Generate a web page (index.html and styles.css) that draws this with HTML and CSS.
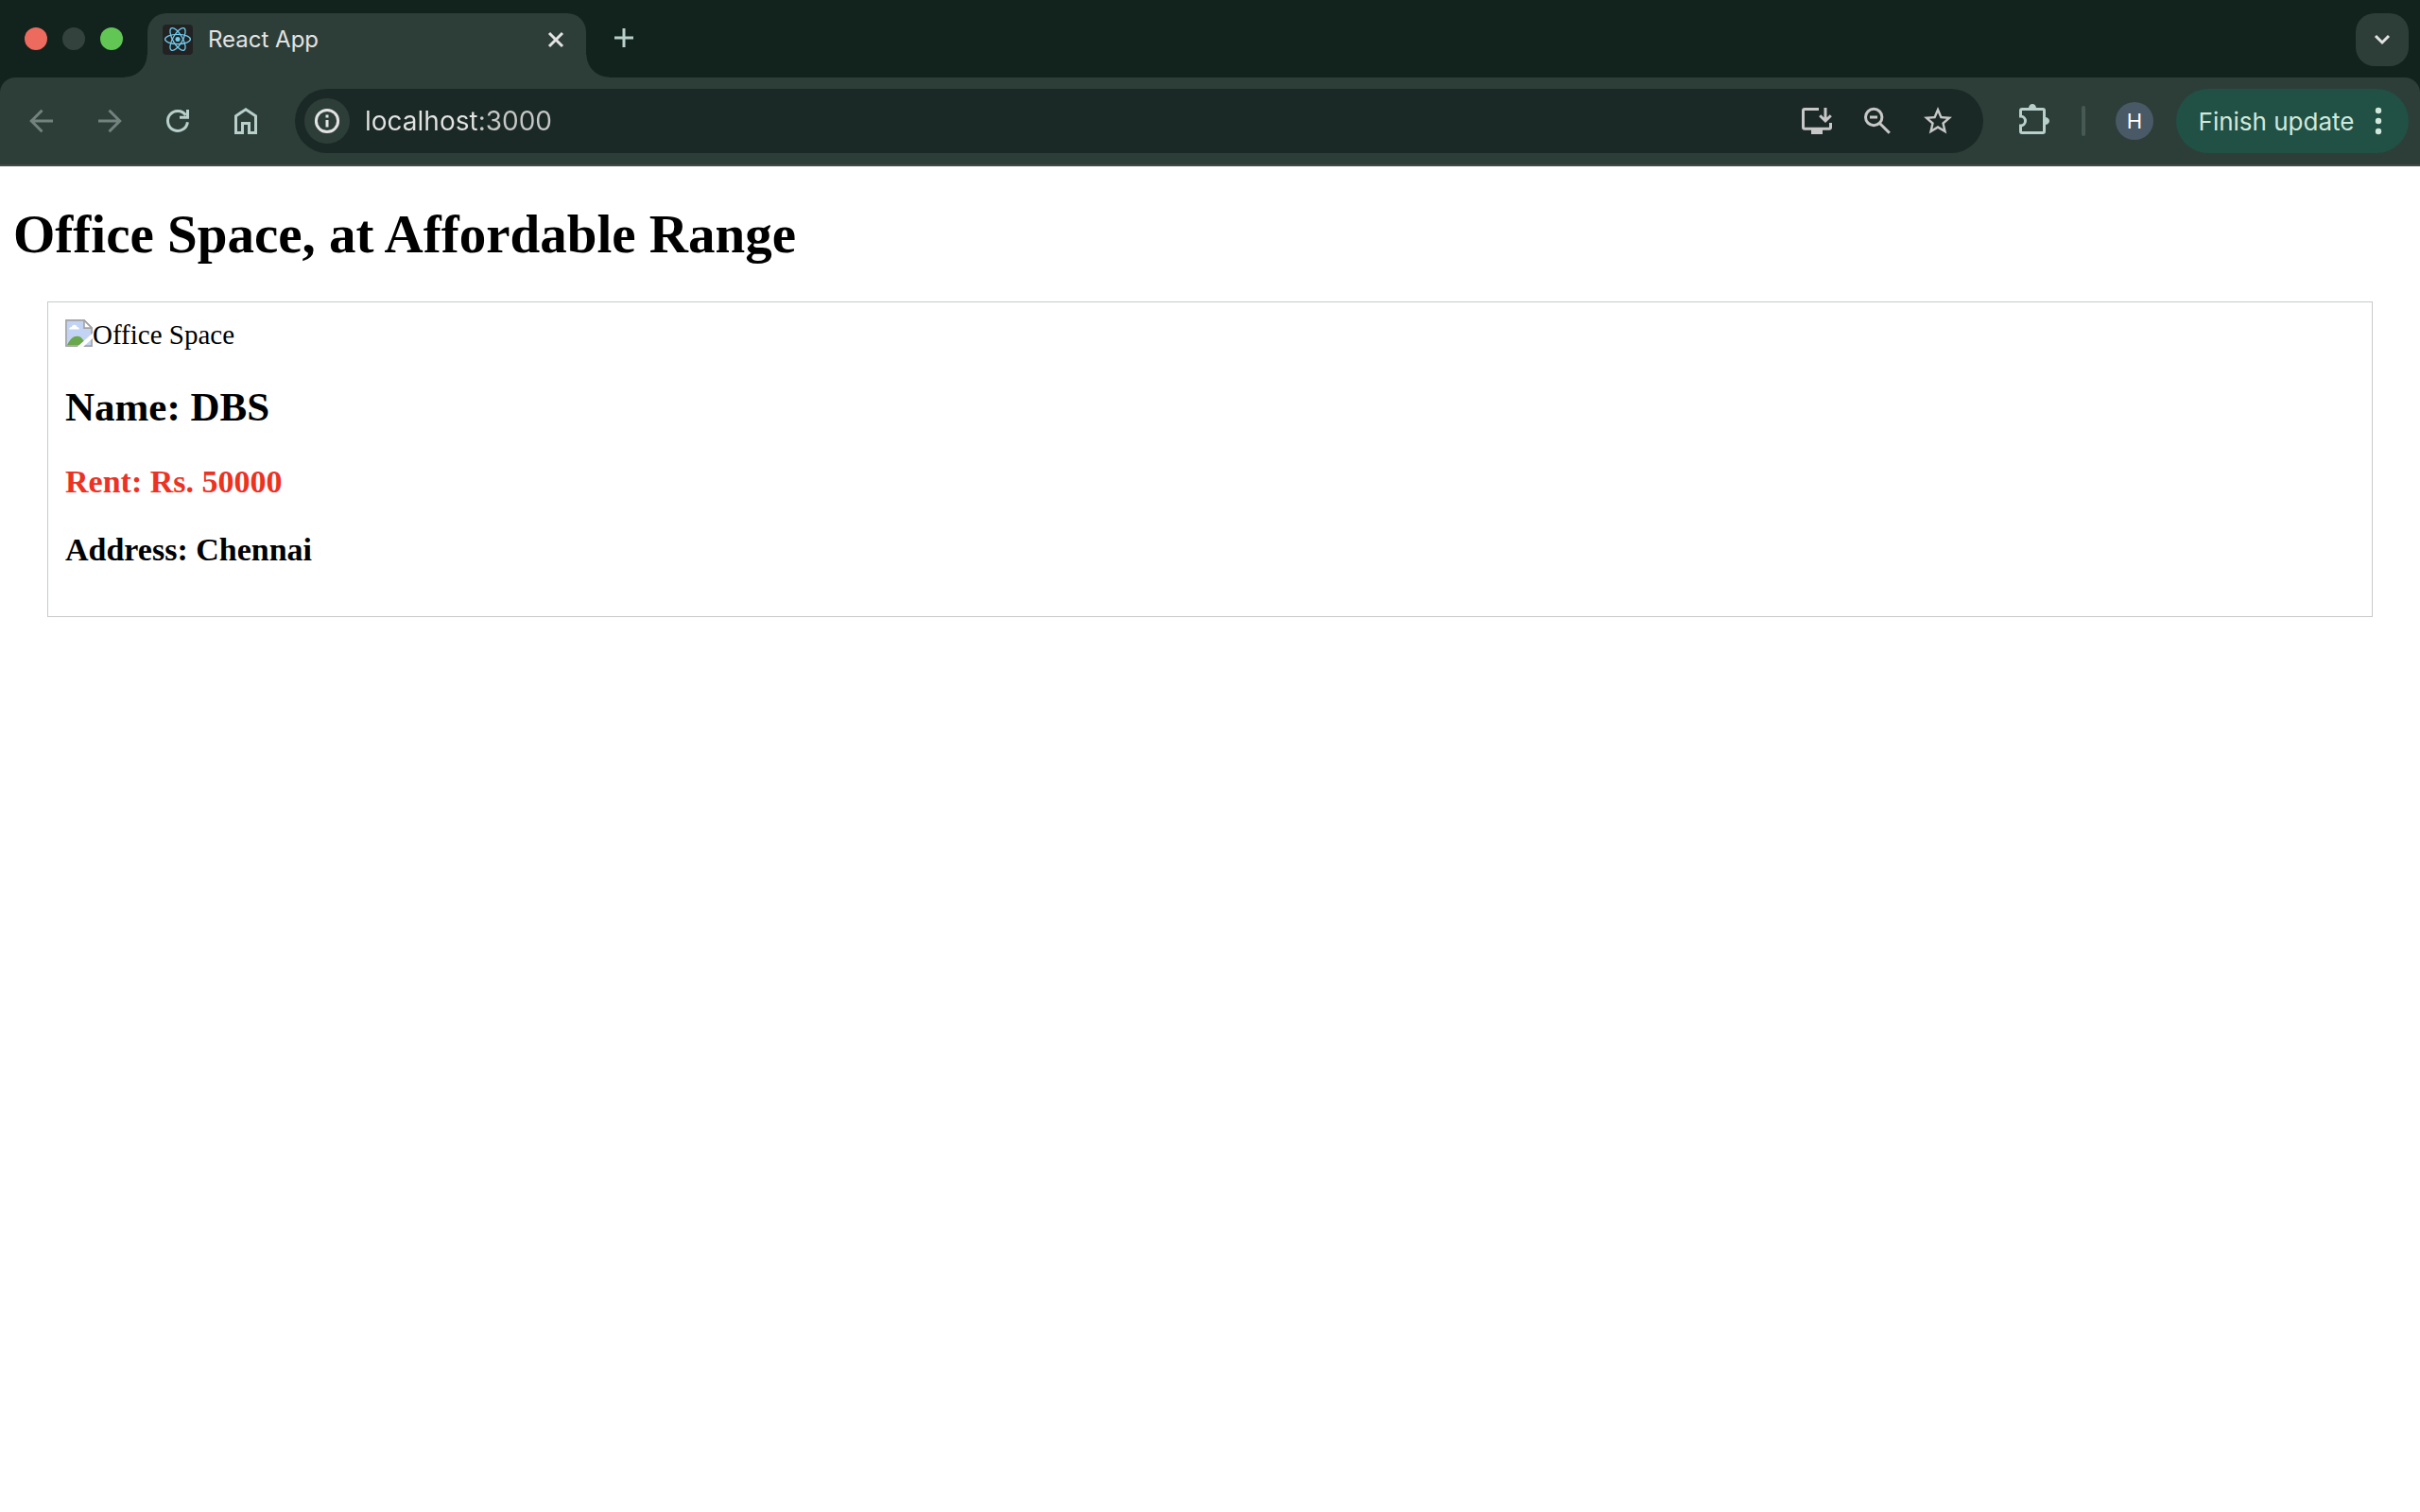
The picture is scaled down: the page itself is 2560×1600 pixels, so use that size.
FILE: index.html
```html
<!DOCTYPE html>
<html lang="en">
<head>
<meta charset="utf-8">
<meta name="viewport" content="width=device-width, initial-scale=1">
<title>React App</title>
<link rel="stylesheet" href="styles.css">
</head>
<body>
<header class="browser">
  <div class="tab-strip">
    <div class="window-controls">
      <button class="light light-close" aria-label="Close window"></button>
      <button class="light light-minimize" aria-label="Minimize window"></button>
      <button class="light light-zoom" aria-label="Zoom window"></button>
    </div>
    <div class="tab">
      <svg class="favicon" viewBox="0 0 32 32" aria-hidden="true">
        <rect width="32" height="32" rx="4" fill="#222"/>
        <g fill="none" stroke="#6fcdf0" stroke-width="1.3">
          <ellipse cx="16" cy="15.5" rx="13.4" ry="5.1"/>
          <ellipse cx="16" cy="15.5" rx="13.4" ry="5.1" transform="rotate(60 16 15.5)"/>
          <ellipse cx="16" cy="15.5" rx="13.4" ry="5.1" transform="rotate(120 16 15.5)"/>
        </g>
        <circle cx="16" cy="15.5" r="2.5" fill="#6fcdf0"/>
      </svg>
      <span class="tab-title">React App</span>
      <button class="tab-close" aria-label="Close tab">
        <svg viewBox="0 0 36 36"><path d="M11 11l14 14M25 11L11 25"/></svg>
      </button>
    </div>
    <button class="new-tab" aria-label="New tab">
      <svg viewBox="0 0 36 36"><path d="M18 8v20M8 18h20"/></svg>
    </button>
    <button class="tab-search" aria-label="Search tabs">
      <svg viewBox="0 0 36 36"><path d="M11 14l7 7 7-7"/></svg>
    </button>
  </div>

  <div class="toolbar">
    <nav class="nav-buttons">
      <button class="tool" disabled aria-label="Back">
        <svg viewBox="0 0 36 36"><path d="M30 18H8M18.5 6.800L7.300 18l11.200 11.200"/></svg>
      </button>
      <button class="tool" disabled aria-label="Forward">
        <svg viewBox="0 0 36 36"><path d="M6 18h22M17.500 6.800L28.700 18 17.500 29.200"/></svg>
      </button>
      <button class="tool" aria-label="Reload">
        <svg viewBox="0 0 36 36"><path d="M28.400 19.200A10.500 10.500 0 1 1 26.500 11.800M28.500 6v8.300H20"/></svg>
      </button>
      <button class="tool" aria-label="Home">
        <svg viewBox="0 0 36 36"><path d="M7.500 30.500V12.700L18 5.700l10.500 7v17.800h-7v-10h-7v10z"/></svg>
      </button>
    </nav>
    <div class="omnibox">
      <button class="site-info" aria-label="Site information">
        <svg viewBox="0 0 36 36"><circle cx="18" cy="18" r="11.600"/><path d="M18 17v7.500M18 11.500v3"/></svg>
      </button>
      <input class="address" type="text" aria-label="Address" value="localhost:3000">
      <button class="omni-action" aria-label="Install app">
        <svg viewBox="0 0 36 36"><path d="M20 5.500H5Q3.500 5.500 3.500 7V24.700Q3.500 26.200 5 26.200H31Q32.500 26.200 32.500 24.700V20M27 4v14M21.200 12.200L27 18l5.800-5.800"/><path class="solid" d="M12 27h12v5H12z"/></svg>
      </button>
      <button class="omni-action" aria-label="Zoom">
        <svg viewBox="0 0 36 36"><circle cx="14.200" cy="14" r="8.700"/><path d="M20.500 20.500l10.300 10.300M10 14h8"/></svg>
      </button>
      <button class="omni-action" aria-label="Bookmark this tab">
        <svg viewBox="0 0 24 24"><path class="solid" d="M22 9.240l-7.190-.620L12 2 9.190 8.630 2 9.240l5.460 4.730L5.820 21 12 17.270 18.180 21l-1.630-7.030L22 9.240zM12 15.400l-3.760 2.270 1-4.280-3.320-2.880 4.380-.380L12 6.100l1.710 4.040 4.380.380-3.320 2.880 1 4.280L12 15.400z"/></svg>
      </button>
    </div>
    <button class="tool" aria-label="Extensions">
      <svg viewBox="0 0 36 36"><path d="M3.500 13V7Q3.500 5.500 5 5.500H27Q28.500 5.500 28.500 7V29Q28.500 30.500 27 30.500H5Q3.500 30.500 3.500 29V23A5 5 0 0 0 3.500 13z"/><path class="solid" d="M12 4.500a4 4.500 0 0 1 8 0zM29.500 14a4.500 4 0 0 1 0 8z"/></svg>
    </button>
    <span class="divider"></span>
    <button class="profile" aria-label="Profile"><span class="avatar">H</span></button>
    <button class="update">Finish update
      <svg viewBox="0 0 36 36" aria-hidden="true"><g class="solid"><circle cx="18" cy="7" r="3.200"/><circle cx="18" cy="18" r="3.200"/><circle cx="18" cy="29" r="3.200"/></g></svg>
    </button>
  </div>
</header>

<main class="page">
  <h1>Office Space, at Affordable Range</h1>
  <section class="office">
    <div class="photo">
      <svg class="broken" viewBox="0 0 16 16" aria-hidden="true">
        <path fill="#c3d3f3" d="M.5.500h10.500l4.500 4.500v10.500H.500z"/>
        <path fill="#fff" d="M2.300 5.800c0-1 .8-1.500 1.500-1.400.4-1.700 2.700-1.700 3.100 0 .8 0 1.300.6 1.300 1.400z"/>
        <path fill="#69a84b" d="M1 15c2-3.600 3.600-5.200 5.900-5.200 2.200 0 3.900 1.800 4.900 5.200z"/>
        <path fill="none" stroke="#a3a3a3" stroke-width=".9" d="M11 .5H.5v15h15V5z"/>
        <path fill="#fff" stroke="#a3a3a3" stroke-width=".9" d="M11 .5V5h4.500z"/>
        <path fill="#fff" d="M7 16L16 8v3l-5.500 5z"/>
      </svg>
      <span>Office Space</span>
    </div>
    <h2>Name: DBS</h2>
    <h3 class="rent">Rent: Rs. 50000</h3>
    <h3>Address: Chennai</h3>
  </section>
</main>
</body>
</html>
```
FILE: styles.css
```css
* { box-sizing: border-box; }

body {
  margin: 0;
  background: #fff;
  color: #000;
  font-family: "Liberation Serif", "Times New Roman", serif;
  font-size: 29px;
}

.browser {
  background: #12221d;
  color: #e3e3e3;
  font-family: Inter, "Liberation Sans", sans-serif;
}

button {
  display: flex;
  align-items: center;
  justify-content: center;
  flex: none;
  margin: 0;
  padding: 0;
  border: 0;
  background: none;
  color: inherit;
  font: inherit;
}

.browser svg { display: block; flex: none; }

button svg {
  width: 36px;
  height: 36px;
  fill: none;
  stroke: currentColor;
  stroke-width: 3;
}

button svg .solid { fill: currentColor; stroke: none; }

/* Tab strip */
.tab-strip {
  display: flex;
  align-items: flex-start;
  height: 82px;
  padding: 14px 12px 0 26px;
}

.window-controls {
  display: flex;
  gap: 16px;
  padding-top: 15px;
  margin-right: 26px;
}

.light { width: 24px; height: 24px; border-radius: 50%; }
.light-close { background: #ed6a5f; }
.light-minimize { background: #34423e; }
.light-zoom { background: #62c655; }

.tab {
  position: relative;
  display: flex;
  align-items: center;
  width: 464px;
  height: 68px;
  padding: 0 14px 12px 16px;
  border-radius: 20px 20px 0 0;
  background: #2d3e39;
}

.tab::before,
.tab::after {
  content: "";
  position: absolute;
  bottom: 0;
  width: 24px;
  height: 24px;
}

.tab::before { right: 100%; background: radial-gradient(circle at 0 0, transparent 23px, #2d3e39 24px); }
.tab::after { left: 100%; background: radial-gradient(circle at 100% 0, transparent 23px, #2d3e39 24px); }

.favicon { width: 32px; height: 32px; }
.tab-title { flex: 1; margin-left: 16px; font-size: 24px; line-height: 32px; }
.tab-close { width: 36px; height: 36px; }
.new-tab { width: 56px; height: 52px; margin-left: 12px; color: #b9cfc9; }

.tab-search {
  width: 56px;
  height: 56px;
  margin-left: auto;
  border-radius: 20px;
  background: #2d3e39;
}

/* Toolbar */
.toolbar {
  display: flex;
  align-items: center;
  height: 94px;
  padding: 10px 12px 10px 10px;
  border-bottom: 2px solid #474a49;
  border-radius: 16px 16px 0 0;
  background: #2d3e39;
}

.nav-buttons { display: flex; gap: 4px; margin-right: 18px; }
.tool { width: 68px; height: 68px; color: #b9cfc9; }
.tool:disabled { color: #74827e; }

.omnibox {
  display: flex;
  flex: 1;
  align-items: center;
  height: 68px;
  margin-right: 20px;
  padding: 0 16px 0 10px;
  border-radius: 34px;
  background: #1a2925;
  color: #c7c7c7;
}

.site-info {
  width: 48px;
  height: 48px;
  border-radius: 50%;
  background: #2d3e39;
  color: #e3e3e3;
}

/* The host is brighter than the port: the text is painted by the gradient. */
.address {
  flex: 1;
  min-width: 0;
  height: 48px;
  margin-left: 16px;
  padding: 0;
  border: 0;
  outline: 0;
  background: linear-gradient(to right, #e3e3e3 118px, #c7c7c7 118px);
  -webkit-background-clip: text;
  background-clip: text;
  color: transparent;
  font: inherit;
  font-size: 28px;
}

.omni-action { width: 64px; height: 64px; }
.divider { width: 4px; height: 32px; margin: 0 18px 0 16px; border-radius: 2px; background: #465a53; }
.profile { width: 68px; height: 68px; margin-right: 10px; }

.avatar {
  width: 40px;
  border-radius: 50%;
  background: #4a5966;
  color: #fff;
  font-size: 22px;
  line-height: 40px;
}

.update {
  gap: 8px;
  width: 246px;
  height: 68px;
  padding-left: 10px;
  border-radius: 34px;
  background: #215045;
  color: #d0e8dc;
  font-size: 26px;
  white-space: nowrap;
}

/* Page */
.page { padding: 1px 14px; }

h1 { margin: 38px 0; font-size: 57px; line-height: 66px; }
h2 { margin: 35px 0; font-size: 43px; line-height: 49px; }
h3 { margin: 33px 0; font-size: 34px; line-height: 39px; }

.office {
  margin: 0 36px;
  padding: 18px;
  border: 1px solid #c8c9ca;
}

.photo { display: flex; line-height: 33px; }
.broken { width: 29px; height: 29px; }
.rent { color: #eb3223; }
.office h3:last-child { margin-bottom: 0; padding-bottom: 33px; }
```
